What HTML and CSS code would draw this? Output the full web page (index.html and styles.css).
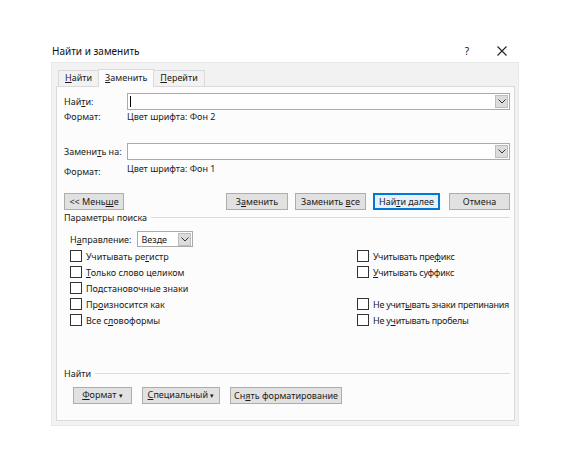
FILE: index.html
```html
<!DOCTYPE html>
<html lang="ru">
<head>
  <meta charset="UTF-8" />
  <title>Найти и заменить</title>
  <link rel="stylesheet" href="styles.css">
</head>
<body>
  <div class="window">
    <div class="titlebar">
      <span class="title">Найти и заменить</span>
      <span class="help">?</span>
      <svg class="close" viewBox="0 0 10 10" width="10" height="10">
        <path d="M0.5 0.5 L9.5 9.5 M9.5 0.5 L0.5 9.5" stroke="#222" stroke-width="1.1" fill="none" />
      </svg>
    </div>
    <div class="frame">
      <div class="tabs">
        <div class="tab"><u>Н</u>айти</div>
        <div class="tab active"><u>З</u>аменить</div>
        <div class="tab"><u>П</u>ерейти</div>
      </div>
      <div class="panel">
        <div class="field">
          <span class="label">Най<u>т</u>и:</span>
          <div class="combo"><span class="caret"></span><span class="drop"><svg viewBox="0 0 8 5" width="8" height="5"><path d="M0.5 0.5 L4 4 L7.5 0.5" stroke="#333" fill="none" /></svg></span></div>
        </div>
        <div class="format">
          <span class="label">Формат:</span>
          <span>Цвет шрифта: Фон 2</span>
        </div>
        <div class="field replace">
          <span class="label">Замени<u>т</u>ь на:</span>
          <div class="combo"><span class="drop"><svg viewBox="0 0 8 5" width="8" height="5"><path d="M0.5 0.5 L4 4 L7.5 0.5" stroke="#333" fill="none" /></svg></span></div>
        </div>
        <div class="format second">
          <span class="label">Формат:</span>
          <span class="value">Цвет шрифта: Фон 1</span>
        </div>

        <div class="actions">
          <button class="btn less">&lt;&lt; Мень<u>ш</u>е</button>
          <span class="spacer"></span>
          <button class="btn w62">З<u>а</u>менить</button>
          <button class="btn w71">Заменить <u>в</u>се</button>
          <button class="btn w67 default">Най<u>т</u>и далее</button>
          <button class="btn w61">Отмена</button>
        </div>

        <div class="group">Параметры поиска</div>
        <div class="direction">
          <span>Н<u>а</u>правление:</span>
          <div class="select"><span>Везде</span><span class="drop"><svg viewBox="0 0 8 5" width="8" height="5"><path d="M0.5 0.5 L4 4 L7.5 0.5" stroke="#333" fill="none" /></svg></span></div>
        </div>
        <div class="options">
          <div class="col">
            <label class="check"><span class="box"></span><span>Учитывать ре<u>г</u>истр</span></label>
            <label class="check"><span class="box"></span><span><u>Т</u>олько слово целиком</span></label>
            <label class="check"><span class="box"></span><span>По<u>д</u>становочные знаки</span></label>
            <label class="check"><span class="box"></span><span>Пр<u>о</u>износится как</span></label>
            <label class="check"><span class="box"></span><span>Все с<u>л</u>овоформы</span></label>
          </div>
          <div class="col right">
            <label class="check"><span class="box"></span><span>Учитывать пре<u>ф</u>икс</span></label>
            <label class="check"><span class="box"></span><span><u>У</u>читывать суффикс</span></label>
            <label class="check"></label>
            <label class="check"><span class="box"></span><span>Не учит<u>ы</u>вать знаки препинания</span></label>
            <label class="check"><span class="box"></span><span>Не у<u>ч</u>итывать пробелы</span></label>
          </div>
        </div>

        <div class="group bottom">Найти</div>
        <div class="tools">
          <button class="btn w59"><u>Ф</u>ормат <span class="arrow">▾</span></button>
          <button class="btn w78"><u>С</u>пециальный <span class="arrow">▾</span></button>
          <button class="btn w112">Сн<u>я</u>ть форматирование</button>
        </div>
      </div>
    </div>
  </div>
</body>
</html>
```

FILE: styles.css
```css
body {
  margin: 0;
  background: #fff;
  font-family: "Noto Sans", "Open Sans", sans-serif;
  font-size: 9px;
  color: #1a1a1a;
}
u {
  text-decoration-thickness: 1px;
  text-underline-offset: 1px;
}
.window {
  width: 468px;
  margin: 40px 0 0 51px;
}
.titlebar {
  height: 22px;
  display: flex;
  align-items: center;
  font-size: 10px;
  color: #111;
}
.title {
  flex: 1;
  padding-left: 1px;
}
.help {
  margin-right: 28px;
}
.close {
  margin-right: 12px;
}
.frame {
  background: #f2f2f2;
  border: 1px solid #e8e8e8;
  padding: 6px 3px 4px 4px;
}
.tabs {
  display: flex;
  height: 17px;
  align-items: flex-end;
  padding-left: 2px;
}
.tab {
  height: 15px;
  line-height: 14px;
  padding: 0 6px;
  border: 1px solid #dadada;
  border-bottom: none;
  margin-right: -1px;
  background: #f2f2f2;
}
.tab.active {
  height: 17px;
  line-height: 16px;
  background: #fcfcfc;
  position: relative;
  top: 1px;
  z-index: 1;
}
.panel {
  background: #fcfcfc;
  border: 1px solid #dadada;
  padding: 6px 4px 8px 7px;
  height: 319px;
}
.field {
  display: flex;
  align-items: center;
  height: 17px;
}
.label {
  width: 63px;
  flex: none;
}
.combo {
  flex: 1;
  height: 15px;
  border: 1px solid #aaa;
  background: #fff;
  display: flex;
  align-items: center;
  justify-content: space-between;
}
.caret {
  width: 1px;
  height: 11px;
  background: #000;
  margin-left: 2px;
}
.drop {
  margin-left: auto;
  width: 13px;
  height: 13px;
  margin-right: 1px;
  background: #dcdcdc;
  border: 1px solid #bdbdbd;
  box-sizing: border-box;
  display: flex;
  align-items: center;
  justify-content: center;
}
.format {
  display: flex;
  height: 13px;
  align-items: center;
}
.replace {
  margin-top: 20px;
}
.format.second {
  height: 18px;
  align-items: flex-end;
}
.format.second .value {
  align-self: flex-start;
  margin-top: 2px;
}
.actions {
  display: flex;
  gap: 7px;
  margin-top: 15px;
}
.spacer {
  flex: 1;
}
.btn {
  font: inherit;
  color: inherit;
  height: 17px;
  margin: 0;
  padding: 0;
  background: #e1e1e1;
  border: 1px solid #adadad;
  text-align: center;
  line-height: 14px;
}
.less { width: 60px; }
.w59 { width: 59px; }
.w61 { width: 61px; margin-left: 2px; }
.w62 { width: 62px; }
.w67 { width: 67px; }
.w71 { width: 71px; }
.w78 { width: 78px; }
.w112 { width: 112px; }
.btn.default {
  background: #e5f1fb;
  border-color: #0078d7;
  box-shadow: inset 0 0 0 1px #0078d7;
}
.group {
  display: flex;
  align-items: center;
  margin-top: 0;
  height: 14px;
}
.group::after {
  content: "";
  flex: 1;
  border-top: 1px solid #dcdcdc;
  margin-left: 4px;
}
.direction {
  display: flex;
  align-items: center;
  gap: 6px;
  margin: 7px 0 0 6px;
}
.select {
  width: 56px;
  height: 16px;
  border: 1px solid #aaa;
  background: #fff;
  display: flex;
  align-items: center;
  box-sizing: border-box;
  padding-left: 3px;
}
.options {
  display: flex;
  margin: 1px 0 0 6px;
}
.col {
  flex: none;
  width: 287px;
}
.col.right {
  width: auto;
  white-space: nowrap;
  letter-spacing: -0.25px;
}
.check {
  display: flex;
  align-items: center;
  height: 16px;
}
.box {
  width: 10px;
  height: 10px;
  border: 1px solid #333;
  background: #fff;
  margin-right: 4px;
  flex: none;
}
.group.bottom {
  margin-top: 38px;
}
.tools {
  display: flex;
  gap: 10px;
  margin: 7px 0 0 9px;
}
.arrow {
  font-size: 7px;
}
```
